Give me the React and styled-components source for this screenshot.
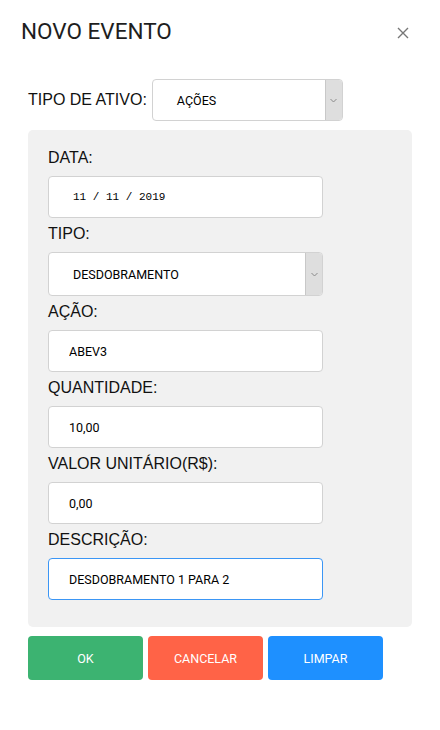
import React from 'react';
import styled, { createGlobalStyle } from 'styled-components';

const GlobalStyle = createGlobalStyle`
  body {
    margin: 0;
    background: #fff;
    font-family: 'Liberation Sans', Arial, sans-serif;
  }
`;

const Modal = styled.div`
  width: 440px;
  height: 730px;
  box-sizing: border-box;
`;

const Header = styled.div`
  display: flex;
  justify-content: space-between;
  align-items: center;
  padding: 18px 30px 0 21px;
`;

const Title = styled.h1`
  margin: 0;
  font-family: Roboto, 'Liberation Sans', sans-serif;
  font-weight: 400;
  font-size: 22.5px;
  line-height: 26px;
  color: #1e1e1e;
`;

const Close = styled.button`
  display: flex;
  align-items: center;
  justify-content: center;
  width: 14px;
  height: 14px;
  padding: 0;
  margin-top: 4px;
  border: none;
  background: none;
  cursor: pointer;
`;

const Body = styled.div`
  padding: 35px 28px 0;
`;

const AssetRow = styled.div`
  display: flex;
  align-items: center;
  gap: 5px;
`;

const RowLabel = styled.label`
  font-size: 16px;
  line-height: 20px;
  color: #111;
`;

const Panel = styled.div`
  margin-top: 9px;
  padding: 12px 20px 27px;
  background: #f1f1f1;
  border-radius: 5px;
`;

const Label = styled.label`
  display: block;
  padding: 6px 0 8px;
  font-size: 16px;
  line-height: 20px;
  color: #111;
`;

const Input = styled.input`
  display: block;
  box-sizing: border-box;
  width: 275px;
  height: 42px;
  margin: 0;
  padding: 0 0 0 ${(p) => (p.$mono ? 24 : 20)}px;
  border: 1px solid ${(p) => (p.$focused ? '#3b96f5' : '#d2d2d2')};
  border-radius: 4px;
  background: #fff;
  outline: none;
  font-family: ${(p) =>
    p.$mono ? "'Liberation Mono', 'Courier New', monospace" : "Roboto, 'Liberation Sans', sans-serif"};
  font-size: ${(p) => (p.$mono ? '11px' : '12.5px')};
  color: #000;
`;

const Select = styled.div`
  display: flex;
  box-sizing: border-box;
  width: ${(p) => p.$width}px;
  height: ${(p) => p.$height}px;
  border: 1px solid #d2d2d2;
  border-radius: 4px;
  background: #fff;
  overflow: hidden;
`;

const SelectValue = styled.div`
  flex: 1;
  display: flex;
  align-items: center;
  padding-left: 24px;
  font-family: Roboto, 'Liberation Sans', sans-serif;
  font-size: 12.5px;
  color: #000;
`;

const SelectArrow = styled.div`
  display: flex;
  align-items: center;
  justify-content: center;
  width: 16px;
  background: #dedede;
  border-left: 1px solid #c8c8c8;
`;

const Buttons = styled.div`
  display: flex;
  gap: 5px;
  margin-top: 9px;
`;

const Button = styled.button`
  width: 115px;
  height: 44px;
  border: none;
  border-radius: 4px;
  background: ${(p) => p.$bg};
  color: #fff;
  font-family: Roboto, 'Liberation Sans', sans-serif;
  font-size: 12.5px;
  cursor: pointer;
`;

const Chevron = () => (
  <svg width="7" height="5" viewBox="0 0 7 5">
    <path d="M0.5 1 L3.5 4 L6.5 1" fill="none" stroke="#8a8a8a" strokeWidth="1" />
  </svg>
);

const Dropdown = ({ value, width, height }) => (
  <Select $width={width} $height={height}>
    <SelectValue>{value}</SelectValue>
    <SelectArrow>
      <Chevron />
    </SelectArrow>
  </Select>
);

export default function App() {
  return (
    <Modal>
      <GlobalStyle />
      <Header>
        <Title>NOVO EVENTO</Title>
        <Close aria-label="Fechar">
          <svg width="12" height="12" viewBox="0 0 12 12">
            <path d="M1 1 L11 11 M11 1 L1 11" stroke="#777" strokeWidth="1.4" />
          </svg>
        </Close>
      </Header>
      <Body>
        <AssetRow>
          <RowLabel>TIPO DE ATIVO:</RowLabel>
          <Dropdown value="AÇÕES" width={191} height={42} />
        </AssetRow>
        <Panel>
          <Label>DATA:</Label>
          <Input $mono readOnly value="11 / 11 / 2019" />
          <Label>TIPO:</Label>
          <Dropdown value="DESDOBRAMENTO" width={275} height={44} />
          <Label>AÇÃO:</Label>
          <Input readOnly value="ABEV3" />
          <Label>QUANTIDADE:</Label>
          <Input readOnly value="10,00" />
          <Label>VALOR UNITÁRIO(R$):</Label>
          <Input readOnly value="0,00" />
          <Label>DESCRIÇÃO:</Label>
          <Input $focused readOnly value="DESDOBRAMENTO 1 PARA 2" />
        </Panel>
        <Buttons>
          <Button $bg="#3cb371">OK</Button>
          <Button $bg="#ff6347">CANCELAR</Button>
          <Button $bg="#1e90ff">LIMPAR</Button>
        </Buttons>
      </Body>
    </Modal>
  );
}
